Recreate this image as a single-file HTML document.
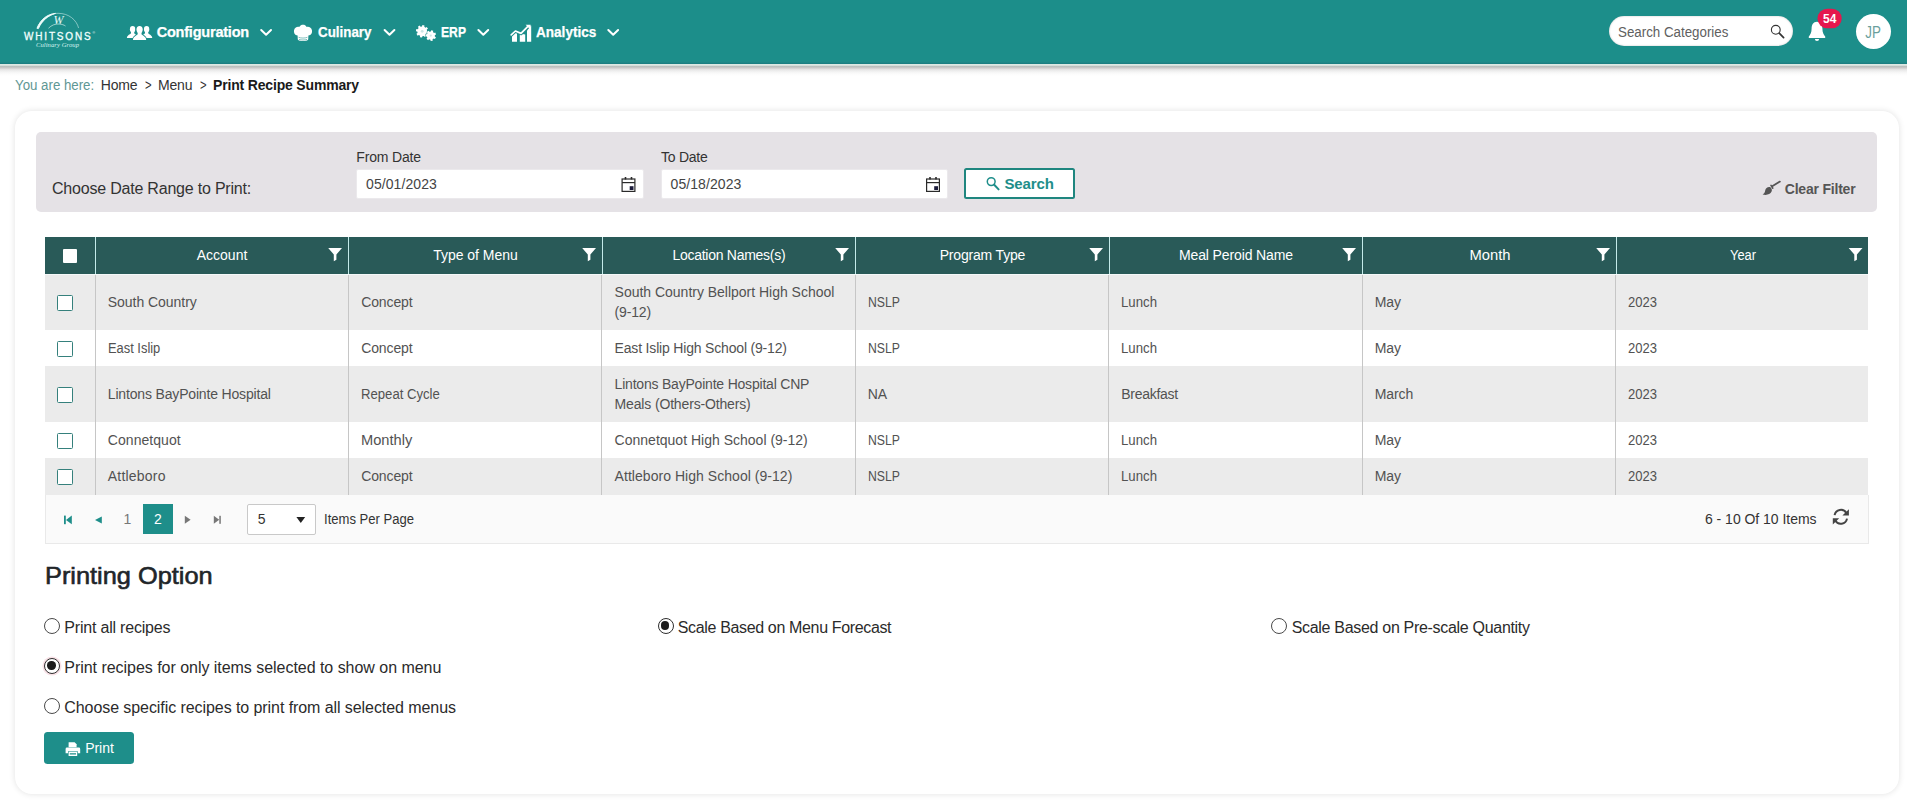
<!DOCTYPE html>
<html lang="en">
<head>
<meta charset="utf-8">
<title>Print Recipe Summary</title>
<style>
*{box-sizing:border-box;margin:0;padding:0}
html,body{width:1907px;height:803px;overflow:hidden;background:#fff}
body{font-family:"Liberation Sans",sans-serif;color:#3b3b3b;position:relative;font-size:14px}
.abs{position:absolute;white-space:nowrap;line-height:1}
.b{position:absolute}
#hdr{left:0;top:0;width:1907px;height:64px;background:linear-gradient(#1c8e8a 0,#1c8e8a 61px,#228a89 62px,#1b7f82 63.5px,#1b7f82 64px)}
#hsh{left:0;top:64px;width:1907px;height:12px;background:linear-gradient(#dde8e3 0,#dde8e3 1.3px,#c4cbc8 1.9px,#b9bcbb 2.7px,#c8c8c8 3.6px,#d8d6d6 4.6px,#e6e5e5 5.6px,#ececec 6.6px,#f2f2f2 7.6px,#f7f7f7 8.6px,#fafafa 9.6px,#fdfdfd 10.6px,#fff 12px)}
#card{left:14.5px;top:110.5px;width:1884px;height:683.5px;border-radius:17px;background:#fff;box-shadow:0 0 6px rgba(0,0,0,.12)}
#filter{left:36px;top:132px;width:1841px;height:79.5px;background:#e5e2e6;border-radius:5px}
.inp{top:169px;height:30px;width:288px;background:#fff;border:1px solid #ebe9ec;border-radius:2px}
#thead{left:45px;top:237px;width:1823.4px;height:36.8px;background:#295a58}
.vsep{top:237px;width:1px;height:37px;background:#c4ebea}
.row{left:45px;width:1823.2px}
.odd{background:#ebebeb}
.cline{top:273.6px;width:1px;height:221px;background:#c6c6c6}
.cb{left:57px;width:16px;height:16px;border:1px solid #35807c;border-radius:1.5px;background:#fff}
#pager{left:45px;top:494.6px;width:1824px;height:49px;background:#fafafa;border:1px solid #e9e9e9;border-top:none}
.radio{width:16px;height:16px;border:1.3px solid #4a4a4a;border-radius:50%;background:#fff}
.radio.on{border:1.5px solid #2e2e2e}
.radio.on::after{content:"";position:absolute;left:2.3px;top:2.3px;width:8.4px;height:8.4px;border-radius:50%;background:#1c1c1c}
svg{position:absolute;overflow:visible}
</style>
</head>
<body>
<div class="b" id="hdr"></div>
<div class="b" id="hsh"></div>
<!-- search box -->
<div class="b" style="left:1609px;top:16px;width:184px;height:30px;border-radius:15px;background:#fff;box-shadow:inset 0 0 2px rgba(0,0,0,.25)"></div>
<!-- avatar -->
<div class="b" style="left:1856px;top:14px;width:35px;height:35px;border-radius:50%;background:#fff"></div>
<!-- badge -->
<div class="b" id="card"></div>
<div class="b" id="filter"></div>
<div class="b inp" style="left:356px"></div>
<div class="b inp" style="left:661px;width:286.5px"></div>
<div class="b" style="left:964px;top:168px;width:111px;height:30.5px;border:2px solid #1f867f;border-radius:2.5px;background:#fff"></div>
<div class="b" id="thead"></div>
<div class="b row odd" style="top:273.6px;height:56.2px"></div>
<div class="b row odd" style="top:366.4px;height:55.6px"></div>
<div class="b row odd" style="top:457.8px;height:36.8px"></div>
<div class="b" id="pager"></div>
<div class="b" style="left:143px;top:504px;width:30px;height:30px;background:#1e8e8a"></div>
<div class="b" style="left:247px;top:503.6px;width:69.4px;height:31px;border:1px solid #c9c9c9;border-radius:2px;background:#fff"></div>
<div class="b" style="left:44px;top:732px;width:90px;height:31.6px;border-radius:3.5px;background:#1e8e8a"></div>
<div class="b" style="left:63px;top:249px;width:14.3px;height:14.3px;background:#fff;border-radius:1px"></div>
<div class="b radio" style="left:44px;top:617.6px"></div>
<div class="b radio on" style="left:44px;top:658px;box-shadow:0 0 0 1.6px rgba(225,120,140,.22)"></div>
<div class="b radio" style="left:44px;top:697.8px"></div>
<div class="b radio on" style="left:657.8px;top:618px"></div>
<div class="b radio" style="left:1271px;top:618px"></div>
<div class="b cb" style="top:295px"></div>
<div class="b cb" style="top:341px"></div>
<div class="b cb" style="top:387px"></div>
<div class="b cb" style="top:433px"></div>
<div class="b cb" style="top:469px"></div>
<div class="b vsep" style="left:95px"></div>
<div class="b vsep" style="left:348px"></div>
<div class="b vsep" style="left:602px"></div>
<div class="b vsep" style="left:855px"></div>
<div class="b vsep" style="left:1109px"></div>
<div class="b vsep" style="left:1362px"></div>
<div class="b vsep" style="left:1616px"></div>
<div class="b cline" style="left:95px"></div>
<div class="b cline" style="left:348px"></div>
<div class="b cline" style="left:601px"></div>
<div class="b cline" style="left:855px"></div>
<div class="b cline" style="left:1108px"></div>
<div class="b cline" style="left:1362px"></div>
<div class="b cline" style="left:1615px"></div>
<div class="b" id="hl" style="left:45px;top:273.8px;width:1823.4px;height:1.1px;background:#f4f8f8"></div>
<svg width="1907" height="803" viewBox="0 0 1907 803" style="left:0;top:0">
<path d="M37 28.3 C41 18.5 49 13.3 58 13.3 C69 13.3 76.5 20 78.6 28" fill="none" stroke="#dff5f3" stroke-width="0.7" opacity=".75"/>
<path d="M37 28.3 C40.5 19.5 47 14.2 55.5 13.4 C48 15.6 42 20.5 38.4 28.6Z" fill="#effdfc" stroke="#effdfc" stroke-width="0.9" stroke-linejoin="round"/>
<path d="M48.5 28.2 C51.5 25.2 55 23.8 59 24 C62 24.2 64 25 65.5 26" fill="none" stroke="#dff5f3" stroke-width="0.8" opacity=".8"/>
<g fill="#fff"><ellipse cx="132.6" cy="29.18" rx="2.67" ry="3.18"/><path d="M130.97 30.99 L130.97 33.22 C130.02 34.51 126.92 35.29 126.92 38.04 L138.28 38.04 C138.28 35.29 135.18 34.51 134.23 33.22 L134.23 30.99Z"/><ellipse cx="146.6" cy="29.18" rx="2.67" ry="3.18"/><path d="M144.97 30.99 L144.97 33.22 C144.02 34.51 140.92 35.29 140.92 38.04 L152.28 38.04 C152.28 35.29 149.18 34.51 148.23 33.22 L148.23 30.99Z"/></g>
<g fill="#1c8e8a" stroke="#1c8e8a" stroke-width="2"><ellipse cx="139.6" cy="29.60" rx="3.10" ry="3.70"/><path d="M137.70 31.70 L137.70 34.30 C136.60 35.80 133.00 36.70 133.00 39.90 L146.20 39.90 C146.20 36.70 142.60 35.80 141.50 34.30 L141.50 31.70Z"/></g>
<g fill="#fff"><ellipse cx="139.6" cy="29.60" rx="3.10" ry="3.70"/><path d="M137.70 31.70 L137.70 34.30 C136.60 35.80 133.00 36.70 133.00 39.90 L146.20 39.90 C146.20 36.70 142.60 35.80 141.50 34.30 L141.50 31.70Z"/></g>
<path d="M261.2 30 l4.9 4.8 l4.9 -4.8" fill="none" stroke="#fff" stroke-width="2" stroke-linecap="round" stroke-linejoin="round"/>
<path d="M384.6 30 l4.9 4.8 l4.9 -4.8" fill="none" stroke="#fff" stroke-width="2" stroke-linecap="round" stroke-linejoin="round"/>
<path d="M478.4 30 l4.9 4.8 l4.9 -4.8" fill="none" stroke="#fff" stroke-width="2" stroke-linecap="round" stroke-linejoin="round"/>
<path d="M608.3 30 l4.9 4.8 l4.9 -4.8" fill="none" stroke="#fff" stroke-width="2" stroke-linecap="round" stroke-linejoin="round"/>
<g fill="#fff"><path d="M297.6 35.6 C294.6 35 293.6 32.4 294 30.4 C294.5 27.8 297 26.4 299.2 27 C300.2 25.4 301.6 24.8 303 24.8 C304.5 24.8 305.8 25.4 306.7 27 C309 26.4 311.5 27.8 312 30.4 C312.4 32.4 311.4 35 308.4 35.6 L308.2 39.6 C307 41.6 299 41.6 297.8 39.6Z"/></g>
<path d="M298.6 37.3 C301 38.3 305 38.3 307.4 37.3 M299 39.4 C301 40.2 305 40.2 307 39.4" stroke="#1e8e8a" stroke-width="0.7" fill="none" opacity=".8"/>
<path d="M428.50 31.47 L428.07 33.59 L426.64 33.37 L425.79 34.64 L426.53 35.87 L424.73 37.07 L423.88 35.90 L422.37 36.20 L422.03 37.60 L419.91 37.17 L420.13 35.74 L418.86 34.89 L417.63 35.63 L416.43 33.83 L417.60 32.98 L417.30 31.47 L415.90 31.13 L416.33 29.01 L417.76 29.23 L418.61 27.96 L417.87 26.73 L419.67 25.53 L420.52 26.70 L422.03 26.40 L422.37 25.00 L424.49 25.43 L424.27 26.86 L425.54 27.71 L426.77 26.97 L427.97 28.77 L426.80 29.62 L427.10 31.13Z" fill="#fff" fill-rule="evenodd"/>
<path d="M435.95 37.21 L434.94 39.07 L433.75 38.45 L432.56 39.31 L432.76 40.63 L430.67 41.00 L430.41 39.68 L429.00 39.28 L428.08 40.27 L426.50 38.86 L427.36 37.84 L426.80 36.49 L425.46 36.39 L425.57 34.27 L426.91 34.31 L427.61 33.02 L426.85 31.91 L428.58 30.68 L429.38 31.75 L430.83 31.50 L431.22 30.22 L433.26 30.79 L432.93 32.09 L434.02 33.06 L435.27 32.57 L436.09 34.53 L434.87 35.08 L434.79 36.54Z" fill="#fff" fill-rule="evenodd" stroke="#1e8e8a" stroke-width="0.9" paint-order="stroke"/>
<circle cx="422.2" cy="31.3" r="1.4" fill="#1c8e8a" opacity=".22"/><circle cx="430.8" cy="35.6" r="1.1" fill="#1c8e8a" opacity=".22"/>
<g fill="#fff"><path d="M512 34.6 L516.2 31.4 L517 31.8 V41.8 H512Z"/><path d="M519.8 33.4 L525.2 34.4 V41.8 H519.8Z"/><path d="M527 30.5 L531.2 25.4 V41.8 H527Z"/></g>
<path d="M510.6 35.4 L515.4 31 L521 33.4 L528.6 25.6" fill="none" stroke="#1c8e8a" stroke-width="3.6" stroke-linejoin="round"/>
<path d="M511.2 34.9 L515.4 31 L521 33.4 L528.4 25.8" fill="none" stroke="#fff" stroke-width="1.7" stroke-linecap="round" stroke-linejoin="round"/><path d="M525.6 24.8 h5 v5z" fill="#fff"/>
<g fill="none" stroke="#333" stroke-linecap="round"><circle cx="1775.8" cy="29.8" r="4.4" stroke-width="1.1"/><path d="M1779.2 33.2 L1783.6 37.6" stroke-width="1.7"/></g>
<path d="M1817 21.8 C1813.2 21.8 1811.6 25 1811.6 28.6 C1811.6 32.6 1810.4 34.6 1808.8 36.4 V37.9 H1825.2 V36.4 C1823.6 34.6 1822.4 32.6 1822.4 28.6 C1822.4 25 1820.8 21.8 1817 21.8Z M1814.9 38.9 a2.1 2.1 0 0 0 4.2 0z" fill="#fff"/>
<rect x="1817.5" y="8.7" width="24.2" height="19.6" rx="9.8" fill="#e5174e"/>
<g fill="none" stroke="#2a2a2a" stroke-width="1.2"><rect x="622.1" y="179" width="12.8" height="12.4"/><path d="M622.1 182.6 h12.8"/><path d="M625.5 177 v2.4 M631.5 177 v2.4" stroke-width="1.6"/></g><rect x="629.7" y="186.2" width="3.8" height="3.8" fill="#1b1b3a"/>
<g fill="none" stroke="#2a2a2a" stroke-width="1.2"><rect x="926.6" y="179" width="12.8" height="12.4"/><path d="M926.6 182.6 h12.8"/><path d="M930 177 v2.4 M936 177 v2.4" stroke-width="1.6"/></g><rect x="934.2" y="186.2" width="3.8" height="3.8" fill="#1b1b3a"/>
<g fill="none" stroke="#1e8e8a" stroke-linecap="round"><circle cx="991.2" cy="181.6" r="3.9" stroke-width="1.5"/><path d="M994.2 184.8 L998.6 189.4" stroke-width="2"/></g>
<g fill="#555" stroke="#555"><path d="M1779.9 181.6 L1772.2 186.2" stroke-width="1.8" stroke-linecap="round"/><path d="M1771 185.4 l1.8 2.8" stroke-width="1.6" stroke-linecap="round"/><path d="M1770.4 187.2 C1768 186.4 1765.6 188 1765.2 190.4 C1765 192.4 1764 193.6 1762.6 194.4 C1766 195.6 1770.2 194.6 1771.6 191.6 C1772.2 190.2 1771.8 188.4 1770.4 187.2Z" stroke="none"/></g>
<path d="M328.2 248 h13.8 l-5.6 6.4 v5.3 l-2.6 1.6 v-6.9z" fill="#fff"/>
<path d="M582.2 248 h13.8 l-5.6 6.4 v5.3 l-2.6 1.6 v-6.9z" fill="#fff"/>
<path d="M835.2 248 h13.8 l-5.6 6.4 v5.3 l-2.6 1.6 v-6.9z" fill="#fff"/>
<path d="M1089.2 248 h13.8 l-5.6 6.4 v5.3 l-2.6 1.6 v-6.9z" fill="#fff"/>
<path d="M1342.2 248 h13.8 l-5.6 6.4 v5.3 l-2.6 1.6 v-6.9z" fill="#fff"/>
<path d="M1596.2 248 h13.8 l-5.6 6.4 v5.3 l-2.6 1.6 v-6.9z" fill="#fff"/>
<path d="M1848.7 248 h13.8 l-5.6 6.4 v5.3 l-2.6 1.6 v-6.9z" fill="#fff"/>
<g fill="#1e8e8a"><rect x="64" y="515.6" width="1.8" height="8.6"/><path d="M71.8 515.6 v8.6 l-5.8 -4.3z"/><path d="M101.8 516.4 v7.2 l-6.8 -3.6z"/></g>
<g fill="#777"><path d="M184.8 515.8 v8 l5.8 -4z"/><path d="M213.8 515.8 v8 l5.4 -4z"/><rect x="219.3" y="515.8" width="1.5" height="8"/></g>
<path d="M296.4 517 h8.8 l-4.4 6z" fill="#222"/>
<g fill="none" stroke="#444" stroke-width="2"><path d="M1834.6 515.2 A6.4 6.4 0 0 1 1846.4 513"/><path d="M1847 518.6 A6.4 6.4 0 0 1 1835.2 520.6"/></g><path d="M1848.9 509.2 V515.6 H1842.4Z M1832.8 524.6 V518.2 H1839.2Z" fill="#444"/>
<g fill="#fff"><path d="M68.6 742.2 h6 l2 2 v3 h-8z"/><path d="M67 747.6 h11.8 a1.4 1.4 0 0 1 1.4 1.4 v4.2 h-2.4 v-2 h-9.8 v2 h-2.4 v-4.2 a1.4 1.4 0 0 1 1.4 -1.4z"/><path d="M68.6 751.8 h8.6 v4.2 h-8.6z M69.8 752.9 v0.9 h6.2 v-0.9z M69.8 754.5 v0.6 h6.2 v-0.6z" fill-rule="evenodd"/></g>
</svg>

<span class="abs" id="t0" style="top:25px;font-size:14.5px;color:#fff;font-weight:700;letter-spacing:-0.211px;left:156.70px;-webkit-text-stroke:0.25px #fff">Configuration</span>
<span class="abs" id="t1" style="top:25px;font-size:14.5px;color:#fff;font-weight:700;left:317.50px;transform-origin:0 0;transform:scaleX(0.9222);-webkit-text-stroke:0.25px #fff">Culinary</span>
<span class="abs" id="t2" style="top:25px;font-size:14.5px;color:#fff;font-weight:700;left:441.40px;transform-origin:0 0;transform:scaleX(0.8381);-webkit-text-stroke:0.25px #fff">ERP</span>
<span class="abs" id="t3" style="top:25px;font-size:14.5px;color:#fff;font-weight:700;left:536.00px;transform-origin:0 0;transform:scaleX(0.9351);-webkit-text-stroke:0.25px #fff">Analytics</span>
<span class="abs" id="t4" style="top:25px;font-size:14px;color:#606060;left:1618.00px;transform-origin:0 0;transform:scaleX(0.9521);">Search Categories</span>
<span class="abs" id="t5" style="top:13px;font-size:12px;color:#fff;font-weight:700;letter-spacing:0.070px;left:1829.70px;transform:translateX(-50%);margin-left:0.035px;">54</span>
<span class="abs" id="t6" style="top:25px;font-size:16px;color:#6a9f9c;left:1873.20px;transform:translateX(-50%) scaleX(0.8355);">JP</span>
<span class="abs" id="t7" style="top:32px;font-size:10px;color:#f2fffe;letter-spacing:1.814px;left:24.00px;-webkit-text-stroke:0.3px #f2fffe">WHITSONS</span>
<span class="abs" id="t8" style="top:32px;font-size:3.5px;color:#e9fbfa;letter-spacing:-0.005px;left:92.40px;">®</span>
<span class="abs" id="t9" style="top:42px;font-size:6.6px;color:#d8f3f1;font-family:'Liberation Serif',serif;letter-spacing:0.066px;left:36.00px;font-style:italic">Culinary Group</span>
<span class="abs" id="t10" style="top:14px;font-size:12px;color:#e9fbfa;font-family:'Liberation Serif',serif;left:53.60px;font-style:italic">W</span>
<span class="abs" id="t11" style="top:78px;font-size:14px;color:#5f9794;left:15.40px;transform-origin:0 0;transform:scaleX(0.9478);">You are here:</span>
<span class="abs" id="t12" style="top:78px;font-size:14px;color:#333;letter-spacing:-0.165px;left:100.70px;">Home</span>
<span class="abs" id="t13" style="top:78px;font-size:14px;color:#333;left:144.50px;transform-origin:0 0;transform:scaleX(0.8061);">&gt;</span>
<span class="abs" id="t14" style="top:78px;font-size:14px;color:#333;letter-spacing:-0.183px;left:158.00px;">Menu</span>
<span class="abs" id="t15" style="top:78px;font-size:14px;color:#333;left:199.80px;transform-origin:0 0;transform:scaleX(0.8061);">&gt;</span>
<span class="abs" id="t16" style="top:78px;font-size:14px;color:#1a1a1a;font-weight:700;letter-spacing:-0.170px;left:213.00px;">Print Recipe Summary</span>
<span class="abs" id="t17" style="top:181px;font-size:16px;color:#333;letter-spacing:-0.206px;left:52.00px;">Choose Date Range to Print:</span>
<span class="abs" id="t18" style="top:150px;font-size:14px;color:#333;letter-spacing:-0.169px;left:356.30px;">From Date</span>
<span class="abs" id="t19" style="top:150px;font-size:14px;color:#333;letter-spacing:-0.250px;left:661.00px;">To Date</span>
<span class="abs" id="t20" style="top:177px;font-size:14px;color:#444;letter-spacing:0.092px;left:366.00px;">05/01/2023</span>
<span class="abs" id="t21" style="top:177px;font-size:14px;color:#444;letter-spacing:0.092px;left:670.50px;">05/18/2023</span>
<span class="abs" id="t22" style="top:176px;font-size:15px;color:#1e8e8a;font-weight:700;letter-spacing:-0.141px;left:1004.50px;">Search</span>
<span class="abs" id="t23" style="top:182px;font-size:14px;color:#555;font-weight:700;letter-spacing:-0.212px;left:1784.80px;">Clear Filter</span>
<span class="abs" id="t24" style="top:248px;font-size:14px;color:#fff;letter-spacing:0.015px;left:222.00px;transform:translateX(-50%);margin-left:0.008px;">Account</span>
<span class="abs" id="t25" style="top:248px;font-size:14px;color:#fff;letter-spacing:-0.036px;left:475.50px;transform:translateX(-50%);margin-left:-0.018px;">Type of Menu</span>
<span class="abs" id="t26" style="top:248px;font-size:14px;color:#fff;letter-spacing:-0.265px;left:729.00px;transform:translateX(-50%);margin-left:-0.132px;">Location Names(s)</span>
<span class="abs" id="t27" style="top:248px;font-size:14px;color:#fff;letter-spacing:-0.181px;left:982.50px;transform:translateX(-50%);margin-left:-0.090px;">Program Type</span>
<span class="abs" id="t28" style="top:248px;font-size:14px;color:#fff;letter-spacing:-0.121px;left:1236.00px;transform:translateX(-50%);margin-left:-0.061px;">Meal Peroid Name</span>
<span class="abs" id="t29" style="top:248px;font-size:14px;color:#fff;left:1489.50px;transform:translateX(-50%) scaleX(1.0534);">Month</span>
<span class="abs" id="t30" style="top:248px;font-size:14px;color:#fff;left:1742.50px;transform:translateX(-50%) scaleX(0.9188);">Year</span>
<span class="abs" id="t31" style="top:295px;font-size:14px;color:#525252;letter-spacing:-0.038px;left:107.80px;">South Country</span>
<span class="abs" id="t32" style="top:295px;font-size:14px;color:#525252;letter-spacing:-0.122px;left:361.20px;">Concept</span>
<span class="abs" id="t33" style="top:285px;font-size:14px;color:#525252;letter-spacing:-0.016px;left:614.60px;">South Country Bellport High School</span>
<span class="abs" id="t34" style="top:305px;font-size:14px;color:#525252;letter-spacing:-0.177px;left:614.60px;">(9-12)</span>
<span class="abs" id="t35" style="top:295px;font-size:14px;color:#525252;left:867.80px;transform-origin:0 0;transform:scaleX(0.8748);">NSLP</span>
<span class="abs" id="t36" style="top:295px;font-size:14px;color:#525252;left:1121.30px;transform-origin:0 0;transform:scaleX(0.9435);">Lunch</span>
<span class="abs" id="t37" style="top:295px;font-size:14px;color:#525252;letter-spacing:-0.084px;left:1374.80px;">May</span>
<span class="abs" id="t38" style="top:295px;font-size:14px;color:#525252;left:1628.40px;transform-origin:0 0;transform:scaleX(0.9308);">2023</span>
<span class="abs" id="t39" style="top:341px;font-size:14px;color:#525252;left:107.80px;transform-origin:0 0;transform:scaleX(0.9206);">East Islip</span>
<span class="abs" id="t40" style="top:341px;font-size:14px;color:#525252;letter-spacing:-0.122px;left:361.20px;">Concept</span>
<span class="abs" id="t41" style="top:341px;font-size:14px;color:#525252;letter-spacing:-0.180px;left:614.60px;">East Islip High School (9-12)</span>
<span class="abs" id="t42" style="top:341px;font-size:14px;color:#525252;left:867.80px;transform-origin:0 0;transform:scaleX(0.8748);">NSLP</span>
<span class="abs" id="t43" style="top:341px;font-size:14px;color:#525252;left:1121.30px;transform-origin:0 0;transform:scaleX(0.9435);">Lunch</span>
<span class="abs" id="t44" style="top:341px;font-size:14px;color:#525252;letter-spacing:-0.084px;left:1374.80px;">May</span>
<span class="abs" id="t45" style="top:341px;font-size:14px;color:#525252;left:1628.40px;transform-origin:0 0;transform:scaleX(0.9308);">2023</span>
<span class="abs" id="t46" style="top:387px;font-size:14px;color:#525252;letter-spacing:-0.166px;left:107.80px;">Lintons BayPointe Hospital</span>
<span class="abs" id="t47" style="top:387px;font-size:14px;color:#525252;left:361.20px;transform-origin:0 0;transform:scaleX(0.9376);">Repeat Cycle</span>
<span class="abs" id="t48" style="top:377px;font-size:14px;color:#525252;letter-spacing:-0.206px;left:614.60px;">Lintons BayPointe Hospital CNP</span>
<span class="abs" id="t49" style="top:397px;font-size:14px;color:#525252;letter-spacing:-0.155px;left:614.60px;">Meals (Others-Others)</span>
<span class="abs" id="t50" style="top:387px;font-size:14px;color:#525252;letter-spacing:-0.127px;left:867.80px;">NA</span>
<span class="abs" id="t51" style="top:387px;font-size:14px;color:#525252;letter-spacing:-0.293px;left:1121.30px;">Breakfast</span>
<span class="abs" id="t52" style="top:387px;font-size:14px;color:#525252;letter-spacing:-0.101px;left:1374.80px;">March</span>
<span class="abs" id="t53" style="top:387px;font-size:14px;color:#525252;left:1628.40px;transform-origin:0 0;transform:scaleX(0.9308);">2023</span>
<span class="abs" id="t54" style="top:433px;font-size:14px;color:#525252;letter-spacing:0.049px;left:107.80px;">Connetquot</span>
<span class="abs" id="t55" style="top:433px;font-size:14px;color:#525252;left:361.20px;transform-origin:0 0;transform:scaleX(1.0463);">Monthly</span>
<span class="abs" id="t56" style="top:433px;font-size:14px;color:#525252;letter-spacing:0.006px;left:614.60px;">Connetquot High School (9-12)</span>
<span class="abs" id="t57" style="top:433px;font-size:14px;color:#525252;left:867.80px;transform-origin:0 0;transform:scaleX(0.8748);">NSLP</span>
<span class="abs" id="t58" style="top:433px;font-size:14px;color:#525252;left:1121.30px;transform-origin:0 0;transform:scaleX(0.9435);">Lunch</span>
<span class="abs" id="t59" style="top:433px;font-size:14px;color:#525252;letter-spacing:-0.084px;left:1374.80px;">May</span>
<span class="abs" id="t60" style="top:433px;font-size:14px;color:#525252;left:1628.40px;transform-origin:0 0;transform:scaleX(0.9308);">2023</span>
<span class="abs" id="t61" style="top:469px;font-size:14px;color:#525252;letter-spacing:0.206px;left:107.80px;">Attleboro</span>
<span class="abs" id="t62" style="top:469px;font-size:14px;color:#525252;letter-spacing:-0.122px;left:361.20px;">Concept</span>
<span class="abs" id="t63" style="top:469px;font-size:14px;color:#525252;letter-spacing:0.041px;left:614.60px;">Attleboro High School (9-12)</span>
<span class="abs" id="t64" style="top:469px;font-size:14px;color:#525252;left:867.80px;transform-origin:0 0;transform:scaleX(0.8748);">NSLP</span>
<span class="abs" id="t65" style="top:469px;font-size:14px;color:#525252;left:1121.30px;transform-origin:0 0;transform:scaleX(0.9435);">Lunch</span>
<span class="abs" id="t66" style="top:469px;font-size:14px;color:#525252;letter-spacing:-0.084px;left:1374.80px;">May</span>
<span class="abs" id="t67" style="top:469px;font-size:14px;color:#525252;left:1628.40px;transform-origin:0 0;transform:scaleX(0.9308);">2023</span>
<span class="abs" id="t68" style="top:512px;font-size:14px;color:#777;letter-spacing:-0.020px;left:127.30px;transform:translateX(-50%);margin-left:-0.010px;">1</span>
<span class="abs" id="t69" style="top:512px;font-size:14px;color:#fff;letter-spacing:-0.020px;left:158.00px;transform:translateX(-50%);margin-left:-0.010px;">2</span>
<span class="abs" id="t70" style="top:512px;font-size:14px;color:#333;letter-spacing:-0.020px;left:257.70px;">5</span>
<span class="abs" id="t71" style="top:512px;font-size:14px;color:#333;left:324.20px;transform-origin:0 0;transform:scaleX(0.9326);">Items Per Page</span>
<span class="abs" id="t72" style="top:512px;font-size:14px;color:#333;letter-spacing:-0.026px;left:1705.00px;">6 - 10 Of 10 Items</span>
<span class="abs" id="t73" style="top:564px;font-size:24px;color:#212529;left:44.60px;transform-origin:0 0;transform:scaleX(1.0556);-webkit-text-stroke:0.6px #212529">Printing Option</span>
<span class="abs" id="t74" style="top:620px;font-size:16px;color:#2b2b2b;letter-spacing:-0.199px;left:64.30px;">Print all recipes</span>
<span class="abs" id="t75" style="top:660px;font-size:16px;color:#2b2b2b;letter-spacing:-0.035px;left:64.30px;">Print recipes for only items selected to show on menu</span>
<span class="abs" id="t76" style="top:700px;font-size:16px;color:#2b2b2b;letter-spacing:-0.074px;left:64.30px;">Choose specific recipes to print from all selected menus</span>
<span class="abs" id="t77" style="top:620px;font-size:16px;color:#2b2b2b;letter-spacing:-0.351px;left:677.80px;">Scale Based on Menu Forecast</span>
<span class="abs" id="t78" style="top:620px;font-size:16px;color:#2b2b2b;letter-spacing:-0.307px;left:1291.70px;">Scale Based on Pre-scale Quantity</span>
<span class="abs" id="t79" style="top:741px;font-size:14px;color:#fff;letter-spacing:-0.039px;left:85.20px;">Print</span>
</body>
</html>
